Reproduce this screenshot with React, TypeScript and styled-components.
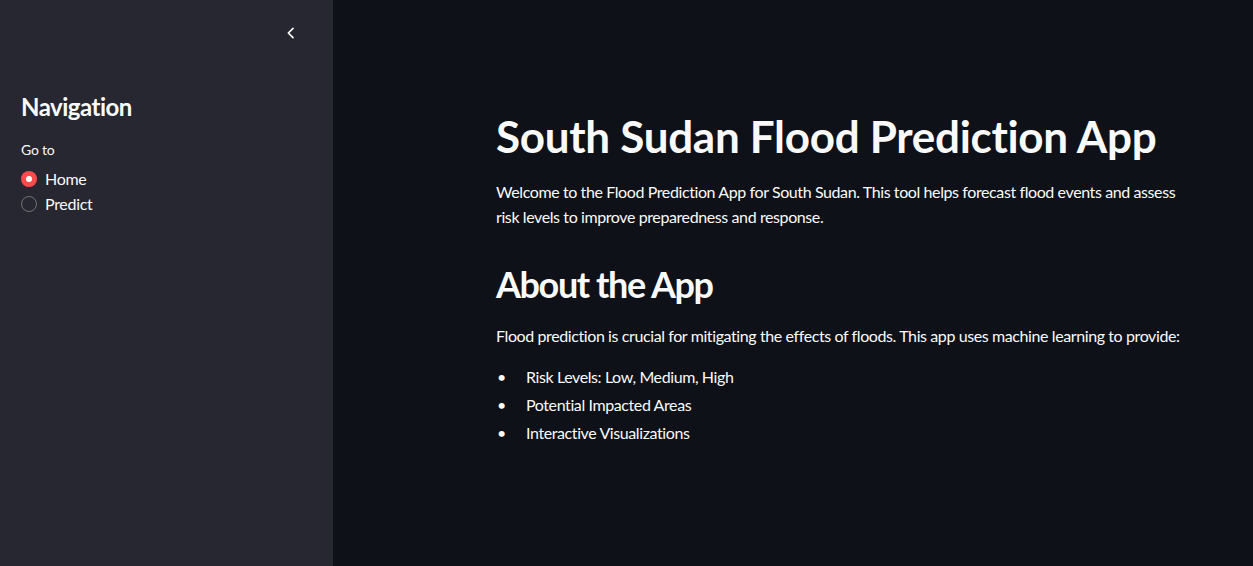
import React from "react";
import styled, { createGlobalStyle } from "styled-components";

const Global = createGlobalStyle`
  html, body { margin: 0; padding: 0; background: #0e1117; }
  body { font-family: "Lato", "Noto Sans", sans-serif; color: #fafafa; -webkit-font-smoothing: antialiased; }
  * { box-sizing: border-box; }
`;

const Shell = styled.div`
  display: flex;
  width: 100%;
  height: 100vh;
  min-height: 566px;
  background: #0e1117;
`;

const Sidebar = styled.aside`
  width: 333px;
  flex: 0 0 333px;
  background: #262730;
  display: flex;
  flex-direction: column;
`;

const SidebarHeader = styled.div`
  display: flex;
  justify-content: flex-end;
  align-items: center;
  height: 66px;
  padding-right: 30px;
`;

const CollapseButton = styled.button`
  background: none;
  border: none;
  padding: 4px;
  display: flex;
  align-items: center;
  justify-content: center;
  color: #fafafa;
  cursor: pointer;
`;

const SidebarBody = styled.div`
  padding: 25px 21px 0 21px;
  display: flex;
  flex-direction: column;
`;

const SideTitle = styled.h2`
  margin: 0;
  font-size: 24px;
  font-weight: 700;
  line-height: 32px;
  letter-spacing: -0.5px;
`;

const FieldLabel = styled.div`
  margin-top: 17px;
  font-size: 14px;
  line-height: 20px;
  letter-spacing: -0.2px;
`;

const RadioGroup = styled.div`
  display: flex;
  flex-direction: column;
  margin-top: 6px;
`;

const RadioRow = styled.label`
  display: flex;
  align-items: center;
  gap: 8px;
  height: 25px;
  font-size: 16px;
  letter-spacing: -0.3px;
`;

const RadioDot = styled.span<{ $checked: boolean }>`
  width: 16px;
  height: 16px;
  border-radius: 50%;
  display: flex;
  align-items: center;
  justify-content: center;
  background: ${(p) => (p.$checked ? "#ff4b4b" : "transparent")};
  border: ${(p) => (p.$checked ? "none" : "1px solid rgba(250,250,250,0.35)")};
  &::after {
    content: "";
    width: 6px;
    height: 6px;
    border-radius: 50%;
    background: #fff;
    display: ${(p) => (p.$checked ? "block" : "none")};
  }
`;

const Main = styled.main`
  flex: 1;
  padding: 110px 53px 0 163px;
`;

const Title = styled.h1`
  margin: 0;
  font-size: 44px;
  font-weight: 700;
  line-height: 53px;
  letter-spacing: -0.3px;
`;

const Para = styled.p`
  margin: 0;
  font-size: 16px;
  line-height: 25px;
  letter-spacing: -0.4px;
`;

const Intro = styled(Para)`
  margin-top: 16px;
`;

const Subtitle = styled.h2`
  margin: 33px 0 0;
  font-size: 36px;
  font-weight: 700;
  line-height: 44px;
  letter-spacing: -1.4px;
`;

const AboutPara = styled(Para)`
  margin-top: 17px;
`;

const List = styled.ul`
  margin: 16px 0 0;
  padding: 0;
  list-style: none;
  font-size: 16px;
  line-height: 25px;
  letter-spacing: -0.4px;
`;

const Item = styled.li`
  display: flex;
  margin-bottom: 3px;
  &::before {
    content: "•";
    width: 29px;
    flex: 0 0 29px;
    padding-left: 1px;
    letter-spacing: 0;
  }
`;

export default function App() {
  return (
    <>
      <Global />
      <Shell>
        <Sidebar>
          <SidebarHeader>
            <CollapseButton aria-label="Collapse sidebar">
              <svg width="16" height="16" viewBox="0 0 24 24" fill="none" stroke="#fafafa" strokeWidth="2.6" strokeLinecap="round" strokeLinejoin="round">
                <path d="M15 5l-7 7 7 7" />
              </svg>
            </CollapseButton>
          </SidebarHeader>
          <SidebarBody>
            <SideTitle>Navigation</SideTitle>
            <FieldLabel>Go to</FieldLabel>
            <RadioGroup>
              <RadioRow>
                <RadioDot $checked={true} />
                Home
              </RadioRow>
              <RadioRow>
                <RadioDot $checked={false} />
                Predict
              </RadioRow>
            </RadioGroup>
          </SidebarBody>
        </Sidebar>
        <Main>
          <Title>South Sudan Flood Prediction App</Title>
          <Intro>
            Welcome to the Flood Prediction App for South Sudan. This tool helps forecast flood events and assess risk levels to improve preparedness and response.
          </Intro>
          <Subtitle>About the App</Subtitle>
          <AboutPara>
            Flood prediction is crucial for mitigating the effects of floods. This app uses machine learning to provide:
          </AboutPara>
          <List>
            <Item>Risk Levels: Low, Medium, High</Item>
            <Item>Potential Impacted Areas</Item>
            <Item>Interactive Visualizations</Item>
          </List>
        </Main>
      </Shell>
    </>
  );
}
